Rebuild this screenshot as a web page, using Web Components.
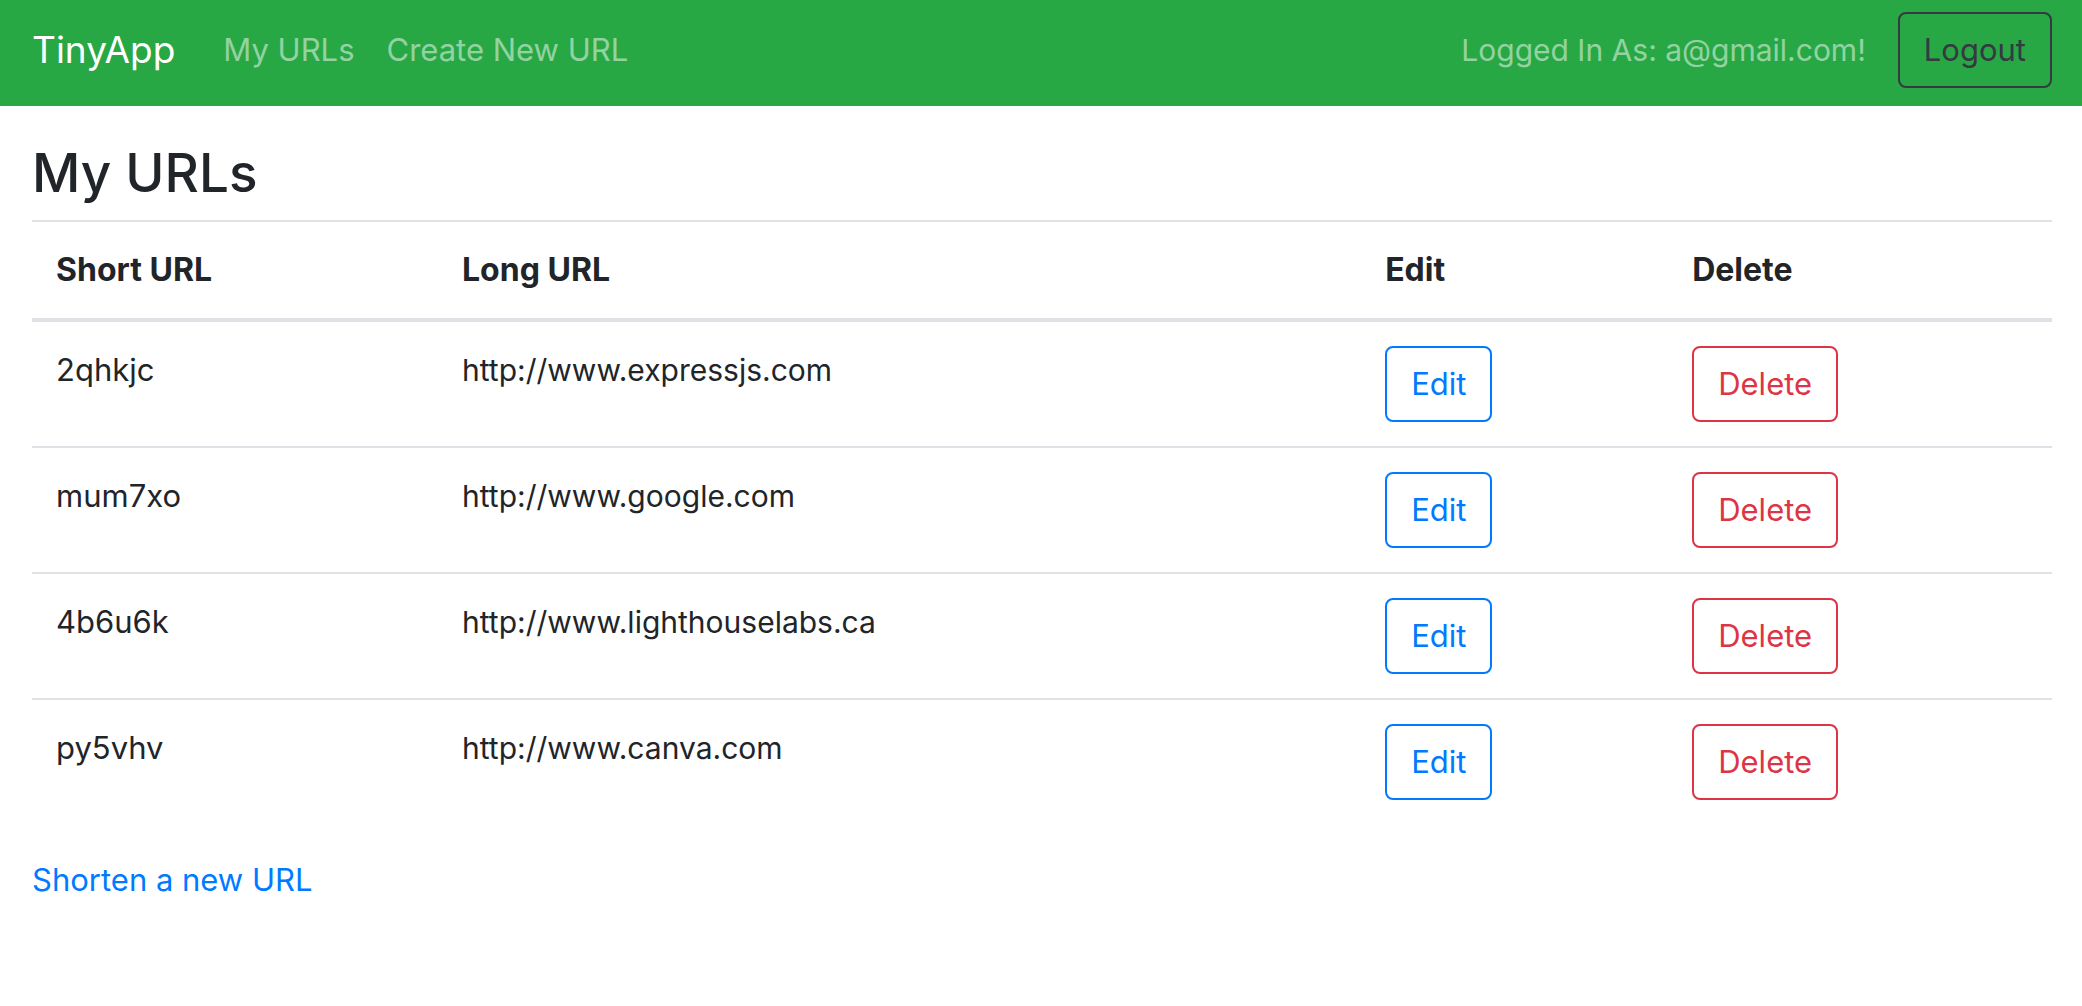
<!DOCTYPE html>
<html lang="en">
<head>
<meta charset="utf-8">
<title>TinyApp</title>
<style>
  body {
    margin: 0;
    background: #fff;
    color: #212529;
    font: 400 31px/48px Inter, "Liberation Sans", sans-serif;
  }
</style>
</head>
<body>
<tiny-app></tiny-app>

<template id="outline-button">
  <style>
    :host { display: inline-block; vertical-align: top; --tone: #007bff; }
    :host([variant="danger"]) { --tone: #dc3545; }
    :host([variant="dark"]) { --tone: #343a40; }
    button {
      display: block;
      box-sizing: border-box;
      margin: 0;
      padding: 12px 24px;
      border: 2px solid var(--tone);
      border-radius: 8px;
      background: transparent;
      color: var(--tone);
      font: inherit;
      white-space: nowrap;
      cursor: pointer;
    }
  </style>
  <button type="button"><slot></slot></button>
</template>

<template id="nav-bar">
  <style>
    :host { display: block; background: #28a745; }
    nav { display: flex; align-items: center; padding: 12px 30px 18px 32px; }
    a { text-decoration: none; color: inherit; }
    .brand { margin-right: 48px; color: #fff; font-size: 37px; }
    .links, .session { display: flex; align-items: center; gap: 32px; color: rgba(255, 255, 255, .5); }
    .session { margin-left: auto; }
    .user { font-size: 30px; }
  </style>
  <nav>
    <a class="brand" href="#">TinyApp</a>
    <div class="links">
      <a href="#urls">My URLs</a>
      <a href="#new">Create New URL</a>
    </div>
    <div class="session">
      <span class="user">Logged In As: <slot></slot>!</span>
      <outline-button variant="dark">Logout</outline-button>
    </div>
  </nav>
</template>

<template id="url-table">
  <style>
    :host { display: block; }
    table { width: 100%; table-layout: fixed; border-collapse: separate; border-spacing: 0; }
    th, td { box-sizing: border-box; padding: 24px; text-align: left; vertical-align: top; }
    th { border-top: 2px solid #dee2e6; border-bottom: 4px solid #dee2e6; font-size: 32px; font-weight: 700; }
    tr + tr td { border-top: 2px solid #dee2e6; }
    th.short { width: 20.1%; }
    th.long { width: 45.7%; }
    th.edit { width: 15.2%; }
    td.long { font-size: 30px; }
  </style>
  <table>
    <thead>
      <tr>
        <th class="short" scope="col">Short URL</th>
        <th class="long" scope="col">Long URL</th>
        <th class="edit" scope="col">Edit</th>
        <th scope="col">Delete</th>
      </tr>
    </thead>
    <tbody></tbody>
  </table>
</template>

<template id="tiny-app">
  <style>
    :host { display: block; }
    main { padding: 34px 30px 32px 32px; }
    h3 { margin: 0 0 14px; font-size: 53px; line-height: 66px; font-weight: 500; }
    url-table { margin-bottom: 32px; }
    a { color: #007bff; text-decoration: none; }
  </style>
  <nav-bar>a@gmail.com</nav-bar>
  <main>
    <h3>My URLs</h3>
    <url-table></url-table>
    <a href="#new">Shorten a new URL</a>
  </main>
</template>

<script>
  class TemplateElement extends HTMLElement {
    constructor() {
      super();
      const template = document.getElementById(this.localName);
      this.attachShadow({ mode: "open" }).append(template.content.cloneNode(true));
    }
  }

  const urls = [
    ["2qhkjc", "http://www.expressjs.com"],
    ["mum7xo", "http://www.google.com"],
    ["4b6u6k", "http://www.lighthouselabs.ca"],
    ["py5vhv", "http://www.canva.com"]
  ];

  class UrlTable extends TemplateElement {
    connectedCallback() {
      this.shadowRoot.querySelector("tbody").innerHTML = urls.map(([id, url]) => `
        <tr>
          <td>${id}</td>
          <td class="long">${url}</td>
          <td><outline-button>Edit</outline-button></td>
          <td><outline-button variant="danger">Delete</outline-button></td>
        </tr>`).join("");
    }
  }

  customElements.define("outline-button", class extends TemplateElement {});
  customElements.define("nav-bar", class extends TemplateElement {});
  customElements.define("url-table", UrlTable);
  customElements.define("tiny-app", class extends TemplateElement {});
</script>
</body>
</html>
